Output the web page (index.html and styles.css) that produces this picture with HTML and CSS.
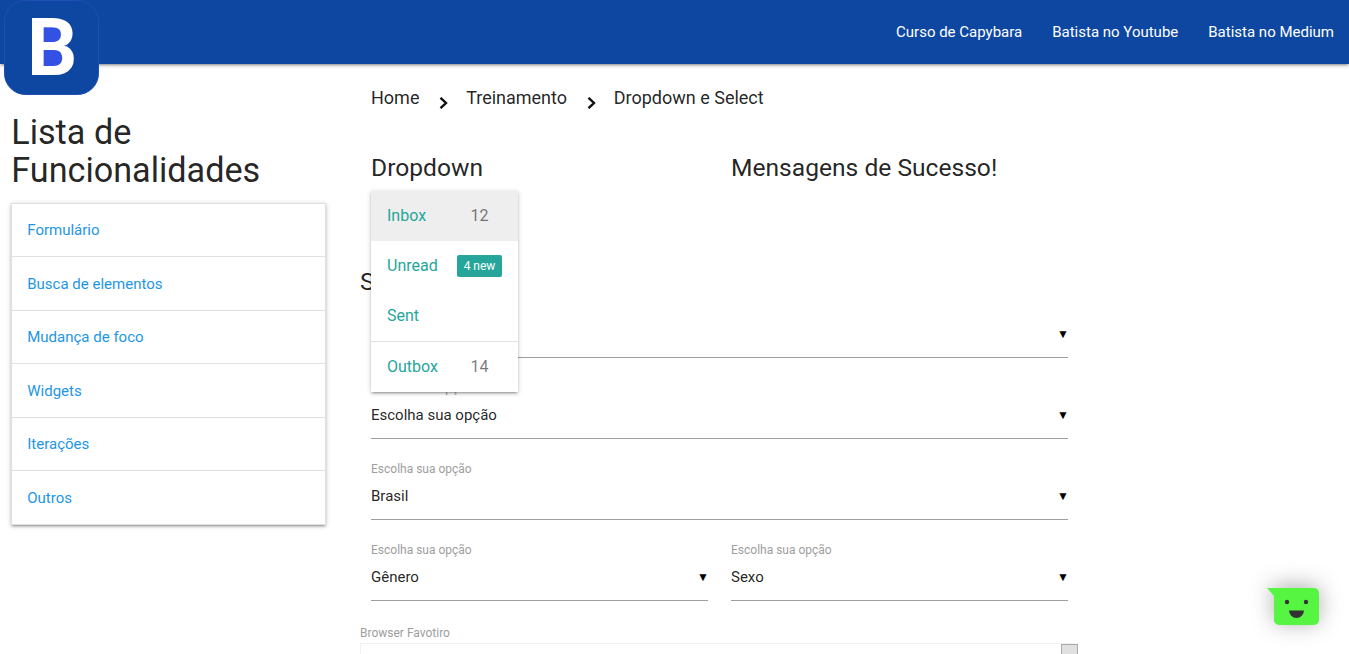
FILE: index.html
```html
<!DOCTYPE html>
<html>

	<head>
		<meta charset="UTF-8">
		<title>Dropdown e Select</title>
		<link rel="stylesheet" href="styles.css">
	</head>

	<body>
		<!--barra superior-->
		<nav class="topbar">
			<a href="#" class="logo">
				<svg width="95" height="95" viewBox="0 0 95 95">
					<rect class="logo-bg" x="0.5" y="0.5" width="94" height="94" rx="21" />
					<rect class="logo-hole" x="38" y="27" width="26" height="40" />
					<text class="logo-text" x="23" y="75">B</text>
				</svg>
			</a>
			<ul class="topbar-links">
				<li><a href="#">Curso de Capybara</a></li>
				<li><a href="#">Batista no Youtube</a></li>
				<li><a href="#">Batista no Medium</a></li>
			</ul>
		</nav>

		<div class="page">
			<!--lista lateral-->
			<aside class="sidebar">
				<h4 class="sidebar-title">Lista de Funcionalidades</h4>
				<ul class="collection">
					<li><a href="#">Formulário</a></li>
					<li><a href="#">Busca de elementos</a></li>
					<li><a href="#">Mudança de foco</a></li>
					<li><a href="#">Widgets</a></li>
					<li><a href="#">Iterações</a></li>
					<li><a href="#">Outros</a></li>
				</ul>
			</aside>

			<main class="content">
				<div class="breadcrumb">
					<a href="#">Home</a>
					<svg class="chevron" width="10" height="12" viewBox="0 0 10 12"><path d="M1.5 .8l5.500 5.200-5.500 5.200" /></svg>
					<a href="#">Treinamento</a>
					<svg class="chevron" width="10" height="12" viewBox="0 0 10 12"><path d="M1.5 .8l5.500 5.200-5.500 5.200" /></svg>
					<a href="#">Dropdown e Select</a>
				</div>

				<div class="grid heading-row">
					<div class="dropdown-col">
						<h5>Dropdown</h5>
						<!--menu aberto, fica por cima do select-->
						<ul class="dropdown-menu">
							<li class="active"><span>Inbox</span><span class="count">12</span></li>
							<li><span>Unread</span><span class="badge">4 new</span></li>
							<li><span>Sent</span></li>
							<li class="divider"></li>
							<li><span>Outbox</span><span class="count">14</span></li>
						</ul>
					</div>
					<div>
						<h5>Mensagens de Sucesso!</h5>
					</div>
				</div>

				<h5 class="select-title">Select</h5>

				<div class="grid">
					<div class="field wide">
						<label>Escolha sua opção</label>
						<div class="select"><span>Escolha sua opção</span><span class="arrow">▼</span></div>
					</div>
					<div class="field wide">
						<label>Escolha sua opção</label>
						<div class="select"><span>Escolha sua opção</span><span class="arrow">▼</span></div>
					</div>
					<div class="field wide">
						<label>Escolha sua opção</label>
						<div class="select"><span>Brasil</span><span class="arrow">▼</span></div>
					</div>
					<div class="field">
						<label>Escolha sua opção</label>
						<div class="select"><span>Gênero</span><span class="arrow">▼</span></div>
					</div>
					<div class="field">
						<label>Escolha sua opção</label>
						<div class="select"><span>Sexo</span><span class="arrow">▼</span></div>
					</div>
				</div>

				<label class="browser-label">Browser Favotiro</label>
				<div class="browser-box"><div class="scroll-btn"></div></div>
			</main>
		</div>

		<!--widget de chat-->
		<div class="chat">
			<svg width="56" height="42" viewBox="0 0 56 42">
				<path class="chat-bubble" d="M0 0H47a5 5 0 0 1 5 5V32a5 5 0 0 1-5 5H12a5 5 0 0 1-5-5V8z" />
				<circle class="chat-face" cx="20" cy="14" r="2.2" />
				<circle class="chat-face" cx="39" cy="14" r="2.2" />
				<path class="chat-face" d="M22 22.500H37a7.500 7.500 0 0 1-15 0z" />
			</svg>
		</div>
	</body>

</html>
```

FILE: styles.css
```css
* {
	margin: 0;
	padding: 0;
	box-sizing: border-box;
}

html,
body {
	height: 654px;
	overflow: hidden;
}

body {
	font-family: Roboto, "Liberation Sans", sans-serif;
	font-size: 15px;
	line-height: 1.5;
	color: rgba(0, 0, 0, 0.87);
	background: #fff;
}

a {
	color: inherit;
	text-decoration: none;
}

ul {
	list-style: none;
}

h5 {
	font-size: 24.6px;
	font-weight: 400;
	line-height: 27px;
}

/*barra superior*/
.topbar {
	position: relative;
	height: 64px;
	background: #0d47a1;
	box-shadow: 0 2px 2px 0 rgba(0, 0, 0, 0.14), 0 3px 1px -2px rgba(0, 0, 0, 0.12), 0 1px 5px 0 rgba(0, 0, 0, 0.2);
	display: flex;
	justify-content: flex-end;
}

.logo {
	position: absolute;
	left: 4px;
	top: 0;
	width: 95px;
	height: 95px;
}

.logo-bg {
	fill: #0d47a1;
	stroke: #1f4fb4;
	stroke-width: 1;
}

.logo-hole {
	fill: #3352e4;
}

.logo-text {
	font-family: Roboto, sans-serif;
	font-weight: 700;
	font-size: 79px;
	fill: #fff;
}

.topbar-links {
	display: flex;
}

.topbar-links a {
	display: block;
	padding: 0 15px;
	line-height: 64px;
	color: #fff;
}

.page {
	display: flex;
}

/*lista lateral*/
.sidebar {
	width: 337px;
	padding: 50px 11.25px 0;
}

.sidebar-title {
	font-size: 34.2px;
	font-weight: 400;
	line-height: 37.6px;
	margin-bottom: 13.75px;
}

.collection {
	width: 314.75px;
	border: 1px solid #e0e0e0;
	box-shadow: 0 2px 2px 0 rgba(0, 0, 0, 0.14), 0 3px 1px -2px rgba(0, 0, 0, 0.12), 0 1px 5px 0 rgba(0, 0, 0, 0.2);
}

.collection li {
	padding: 15.25px 15px 14.75px;
	line-height: 22.5px;
	border-bottom: 1px solid #e0e0e0;
	color: #1e96e6;
}

.collection li:last-child {
	border-bottom: 0;
}

.content {
	width: 719px;
	margin-left: 23px;
}

.breadcrumb {
	display: flex;
	align-items: center;
	height: 67px;
	padding-left: 11px;
	font-size: 18px;
	color: rgba(0, 0, 0, 0.87);
}

.chevron {
	margin: 10px 16.7px 0 20px;
	fill: none;
	stroke: #111;
	stroke-width: 2.4;
}

.grid {
	display: grid;
	grid-template-columns: 337px 337px;
	column-gap: 23px;
	padding-left: 11px;
}

.heading-row {
	height: 137px;
	padding-top: 23px;
}

.dropdown-col {
	position: relative;
}

.dropdown-menu {
	position: absolute;
	left: 0;
	top: 37px;
	z-index: 5;
	width: 147px;
	background: #fff;
	font-size: 16px;
	color: #26a69a;
	box-shadow: 0 2px 2px 0 rgba(0, 0, 0, 0.14), 0 3px 1px -2px rgba(0, 0, 0, 0.12), 0 1px 5px 0 rgba(0, 0, 0, 0.2);
}

.dropdown-menu li {
	display: flex;
	align-items: center;
	justify-content: space-between;
	height: 50px;
	padding: 0 16px;
}

.dropdown-menu .active {
	background: #eee;
}

.dropdown-menu .divider {
	height: 1px;
	padding: 0;
	background: #e0e0e0;
}

.count {
	width: 45px;
	text-align: center;
	font-size: 16px;
	color: rgba(0, 0, 0, 0.54);
}

.badge {
	width: 45px;
	height: 22px;
	line-height: 22px;
	text-align: center;
	font-size: 12px;
	color: #fff;
	background: #26a69a;
	border-radius: 2px;
}

.select-title {
	height: 31px;
	line-height: 27px;
}

.field {
	height: 81px;
	font-size: 15px;
}

.field.wide {
	grid-column: 1 / 3;
}

.field label {
	display: block;
	height: 16px;
	padding-top: 1px;
	font-size: 12px;
	line-height: 15px;
	color: #9e9e9e;
}

.select {
	display: flex;
	align-items: center;
	justify-content: space-between;
	height: 43px;
	padding-bottom: 3px;
	border-bottom: 1px solid #9e9e9e;
	color: rgba(0, 0, 0, 0.87);
}

.arrow {
	margin-right: -1px;
	font-size: 12px;
	line-height: 13px;
	color: #000;
}

.browser-label {
	display: block;
	margin-top: 3px;
	font-size: 12px;
	line-height: 15px;
	color: #9e9e9e;
}

.browser-box {
	display: flex;
	justify-content: flex-end;
	width: 718px;
	height: 11px;
	margin-top: 2px;
	overflow: hidden;
	border: 1px solid #f2f2f2;
	border-right: 0;
	border-bottom: 0;
}

.scroll-btn {
	flex: none;
	width: 17px;
	height: 17px;
	background: #e0e0e0;
	border: 1px solid #aaa;
}

/*widget de chat*/
.chat {
	position: fixed;
	left: 1267px;
	top: 588px;
	width: 56px;
	height: 42px;
	filter: drop-shadow(0 -2px 11px rgba(0, 0, 0, 0.32));
}

.chat-bubble {
	fill: #55f542;
}

.chat-face {
	fill: #333;
}
```
